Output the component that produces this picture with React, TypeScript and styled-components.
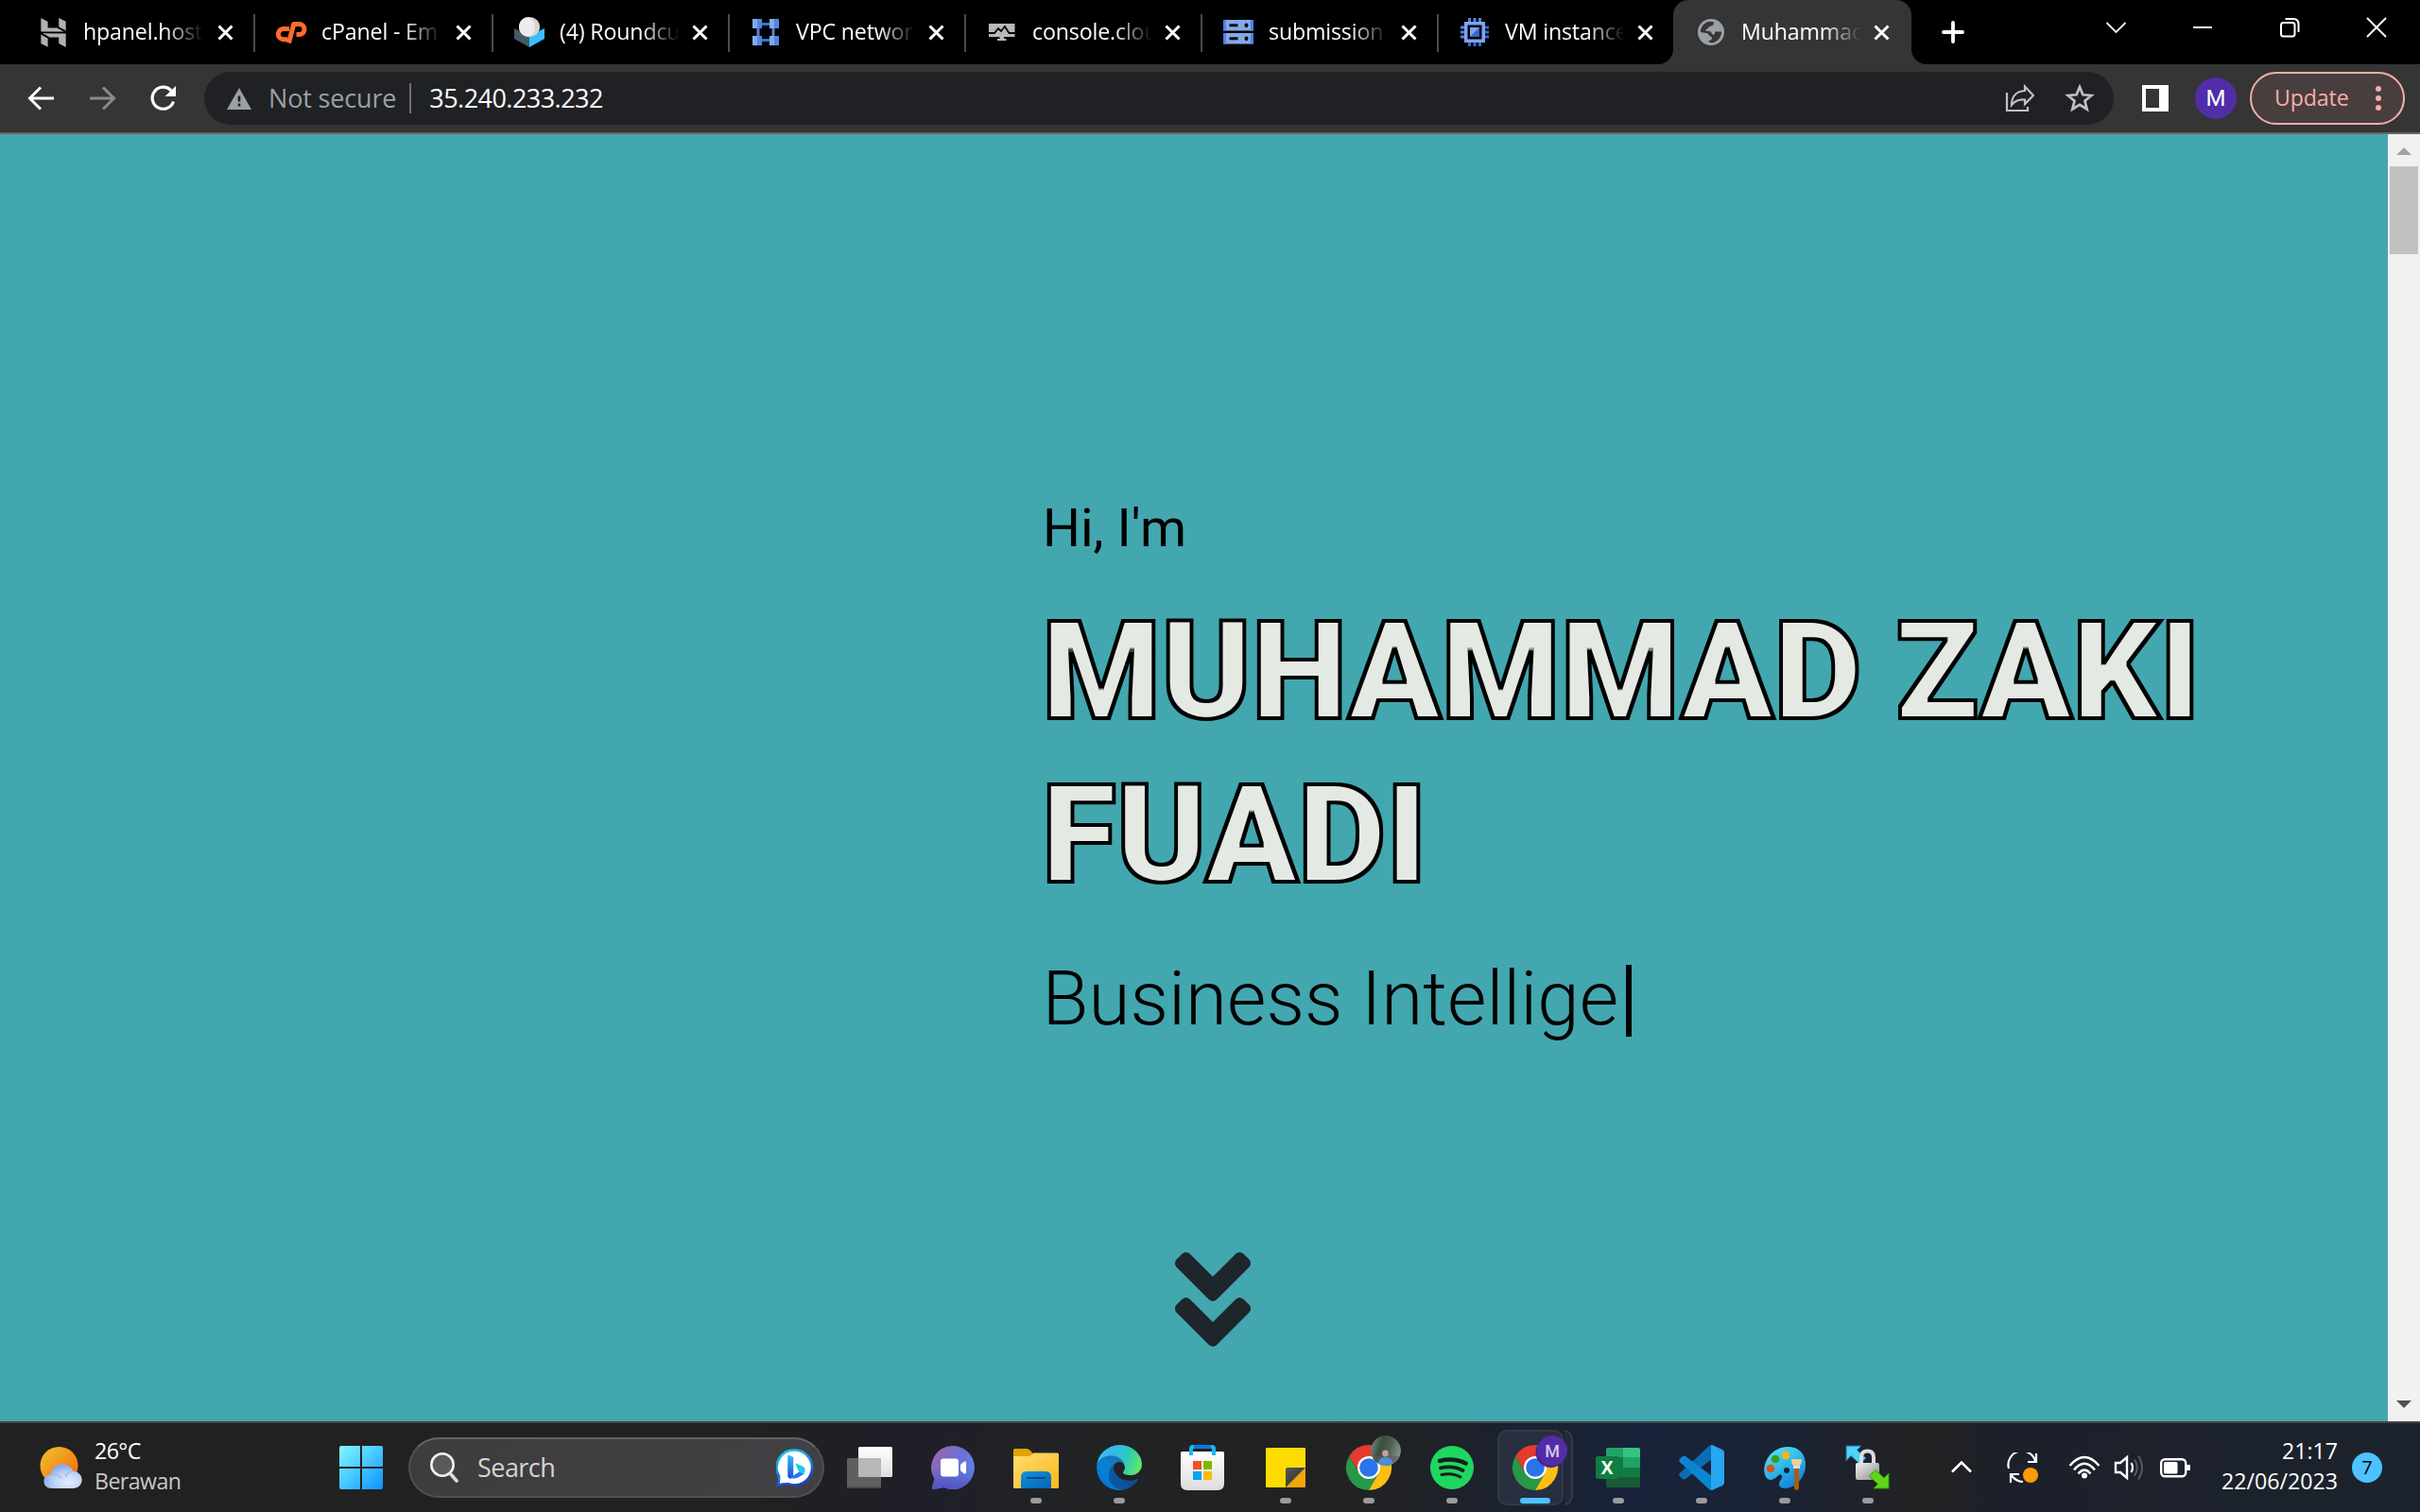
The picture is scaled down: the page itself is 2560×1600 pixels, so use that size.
import React from 'react';
import styled, { createGlobalStyle } from 'styled-components';
import { FaAngleDoubleDown } from 'react-icons/fa';
import { SiHostinger } from 'react-icons/si';

const UI_FONT = '"Segoe UI", "Open Sans", "Noto Sans", sans-serif';

const GlobalStyle = createGlobalStyle`
  *, *::before, *::after { box-sizing: border-box; }
  html, body { margin: 0; padding: 0; background: #000; overflow: hidden; }
  svg { display: block; flex: none; }
`;

const Screen = styled.div`
  width: 2560px;
  height: 1600px;
  display: flex;
  flex-direction: column;
  overflow: hidden;
  font-family: ${UI_FONT};
  letter-spacing: -0.01em;
`;

/* ---------- tab strip ---------- */

const TabStrip = styled.header`
  height: 68px;
  flex: none;
  display: flex;
  align-items: stretch;
  background: #000;
  padding-left: 18px;
`;

const Tab = styled.div<{ $width: number; $active?: boolean; $divider?: boolean }>`
  position: relative;
  width: ${p => p.$width}px;
  flex: none;
  display: flex;
  align-items: center;
  margin-left: ${p => (p.$active ? -2 : 0)}px;
  padding: 0 23px 0 ${p => (p.$active ? 24 : 22)}px;
  background: ${p => (p.$active ? '#353535' : 'transparent')};
  border-radius: ${p => (p.$active ? '16px 16px 0 0' : '0')};
  ${p =>
    p.$divider &&
    `&::after {
      content: '';
      position: absolute;
      right: 0;
      top: 15px;
      width: 2px;
      height: 40px;
      background: #4b4b4b;
    }`}
`;

const TabFoot = styled.span<{ $side: 'left' | 'right' }>`
  position: absolute;
  bottom: 0;
  ${p => p.$side}: -16px;
  width: 16px;
  height: 16px;
  background: radial-gradient(
    circle at ${p => (p.$side === 'left' ? '0 0' : '100% 0')},
    transparent 15.5px,
    #353535 16.5px
  );
`;

const TabIcon = styled.span`
  width: 32px;
  height: 32px;
  flex: none;
  display: flex;
  align-items: center;
  justify-content: center;
`;

const TabTitle = styled.span`
  width: 132px;
  flex: none;
  margin: -2px auto 0 16px;
  overflow: hidden;
  white-space: nowrap;
  color: #fff;
  font-size: 23.2px;
  line-height: 36px;
  mask-image: linear-gradient(90deg, #000 86px, transparent 127px);
`;

const NewTab = styled.div`
  width: 100px;
  display: flex;
  align-items: center;
  padding-left: 32px;
`;

const WindowControls = styled.div`
  margin-left: auto;
  display: flex;
  align-items: center;
  gap: 68px;
  padding: 0 34px 10px 0;
`;

/* ---------- toolbar ---------- */

const Toolbar = styled.div`
  height: 74px;
  flex: none;
  display: flex;
  align-items: center;
  background: #353535;
  border-bottom: 2px solid #666;
  padding: 0 16px 0 28px;
`;

const NavButtons = styled.div`
  width: 188px;
  display: flex;
  gap: 32px;
`;

const Omnibox = styled.div`
  flex: 1;
  height: 56px;
  display: flex;
  align-items: center;
  border-radius: 28px;
  background: #202124;
  padding: 0 20px 0 24px;
`;

const Security = styled.span`
  margin-left: 18px;
  color: #9aa0a6;
  font-size: 27px;
  line-height: 36px;
`;

const AddressDivider = styled.span`
  width: 2px;
  height: 32px;
  background: #6d7074;
  margin: 0 19px 0 14px;
`;

const Address = styled.span`
  flex: 1;
  color: #fff;
  font-size: 27px;
  line-height: 36px;
  letter-spacing: -0.02em;
`;

const OmniActions = styled.div`
  display: flex;
  align-items: center;
  gap: 32px;
`;

const SidePanel = styled.span`
  width: 28px;
  height: 28px;
  margin: 0 28px 0 30px;
  border: 4px solid #fff;
  border-right-width: 10px;
`;

const Profile = styled.span`
  width: 44px;
  height: 44px;
  border-radius: 50%;
  background: #512da8;
  color: #fff;
  font: 400 24px/44px Roboto, sans-serif;
  text-align: center;
  margin-right: 14px;
`;

const UpdateButton = styled.div`
  width: 164px;
  height: 56px;
  display: flex;
  align-items: center;
  justify-content: space-between;
  border: 2px solid #f6aea9;
  border-radius: 28px;
  background: #483e3e;
  color: #f6aea9;
  font-size: 23.2px;
  line-height: 32px;
  padding: 0 23px 0 24px;
`;

const UpdateLabel = styled.span`
  padding-bottom: 2px;
`;

/* ---------- page ---------- */

const Viewport = styled.div`
  flex: 1;
  min-height: 0;
  display: flex;
`;

const Hero = styled.main`
  flex: 1;
  background: #43a7af;
  padding: 381px 0 0 1102px;
  font-family: Roboto, sans-serif;
  letter-spacing: normal;
  color: #000;
`;

const Greeting = styled.p`
  margin: 0 0 0 1px;
  font-size: 56px;
  line-height: 72px;
`;

/* The stroke is painted behind the fill; the filter then draws the inner
   half of the outline, so that no seams show inside the letters. */
const Name = styled.h1`
  margin: 30px 0 0;
  width: 1300px;
  font-size: 144px;
  font-weight: 900;
  line-height: 172.8px;
  color: #e4e9e4;
  -webkit-text-stroke: 4px #000;
  paint-order: stroke fill;
  filter: url(#outline);
`;

const FilterDefs = styled.svg`
  position: absolute;
  width: 0;
  height: 0;
`;

const Role = styled.p`
  margin: 38.600px 0 0 0.500px;
  height: 96px;
  display: flex;
  align-items: center;
  font-size: 80px;
  font-weight: 300;
  line-height: 96px;
  white-space: nowrap;
`;

const Caret = styled.span`
  width: 6px;
  height: 76px;
  margin: 4px 0 0 8px;
  background: #000;
`;

const ScrollHint = styled.div`
  width: 128px;
  margin: 206px 0 0 117px;
  font-size: 128px;
  color: #1e252b;
`;

const Scrollbar = styled.div`
  width: 34px;
  background: #f1f1f1;
  display: flex;
  flex-direction: column;
  align-items: center;
  padding: 14px 0;
`;

const Arrow = styled.span<{ $down?: boolean }>`
  border: 8px solid transparent;
  border-top: ${p => (p.$down ? '8px solid #505050' : '0')};
  border-bottom: ${p => (p.$down ? '0' : '8px solid #a3a3a3')};
`;

const Thumb = styled.span`
  width: 30px;
  height: 93px;
  margin: 12px 0 auto;
  background: #c1c1c1;
`;

/* ---------- taskbar ---------- */

const Taskbar = styled.footer`
  height: 96px;
  flex: none;
  display: flex;
  align-items: center;
  border-top: 2px solid #444547;
  padding: 0 40px;
  background: linear-gradient(
    90deg,
    #212121 0, #212121 800px, #1e1f29 980px, #212225 1080px, #222 1420px,
    #1c212b 1560px, #18233a 1740px, #1a2234 1880px, #212226 2000px, #222 2040px,
    #1c202a 2120px, #1c232c 2560px
  );
`;

const Weather = styled.div`
  width: 298px;
  display: flex;
  align-items: center;
  gap: 11px;
`;

const TwoLines = styled.div<{ $right?: boolean }>`
  display: flex;
  flex-direction: column;
  text-align: ${p => (p.$right ? 'right' : 'left')};
  letter-spacing: ${p => (p.$right ? '0' : '-0.025em')};
  font-size: 23.2px;
  line-height: 32px;
  padding-bottom: 4px;
  color: #fff;
`;

const Condition = styled.span`
  color: #c8c8c8;
`;

const SearchBox = styled.div`
  width: 440px;
  height: 64px;
  margin: 0 4px 0 6px;
  display: flex;
  align-items: center;
  border: 2px solid #505052;
  border-top-color: #646466;
  border-radius: 32px;
  background: linear-gradient(90deg, #3d3d3d, #414145);
  padding: 0 9px 0 21px;
`;

const SearchLabel = styled.span`
  flex: 1;
  margin-left: 20px;
  color: #d4d4d4;
  font-size: 27px;
  line-height: 36px;
  letter-spacing: -0.02em;
`;

const Slot = styled.div<{ $running?: boolean; $active?: boolean }>`
  position: relative;
  width: 88px;
  height: 80px;
  flex: none;
  display: flex;
  align-items: center;
  justify-content: center;
  &::after {
    content: '';
    display: ${p => (p.$running || p.$active ? 'block' : 'none')};
    position: absolute;
    bottom: 2px;
    left: 50%;
    width: ${p => (p.$active ? 32 : 12)}px;
    height: 6px;
    border-radius: 3px;
    transform: translateX(-50%);
    background: ${p => (p.$active ? '#4cc2ff' : '#9b9b9f')};
  }
`;

const ActivePlate = styled.span<{ $back?: boolean }>`
  position: absolute;
  top: 0;
  left: ${p => (p.$back ? 68 : 4)}px;
  width: ${p => (p.$back ? 16 : 70)}px;
  height: 80px;
  border: 2px solid #333a48;
  border-left-width: ${p => (p.$back ? 0 : 2)}px;
  border-radius: ${p => (p.$back ? '0 10px 10px 0' : '10px')};
  background: ${p => (p.$back ? '#232a39' : '#282f3e')};
  clip-path: ${p => (p.$back ? 'inset(0 0 0 7px)' : 'none')};
`;

const IconLayer = styled.span`
  position: relative;
`;

const Tray = styled.div`
  margin-left: auto;
  display: flex;
  align-items: center;
`;

const TraySpace = styled.span<{ $after: number }>`
  margin-right: ${p => p.$after}px;
`;

const Notifications = styled.span`
  width: 32px;
  height: 32px;
  margin-left: 15px;
  border-radius: 50%;
  background: #4cc2ff;
  color: #000;
  font-size: 20px;
  line-height: 31px;
  text-align: center;
`;

/* ---------- favicons ---------- */

const CpanelIcon = () => (
  <svg width="34" height="24" viewBox="0 0 34 24" fill="none" stroke="#ff6c2c" strokeWidth="5">
    <path d="M15 8.500H9.500A5.600 5.600 0 0 0 8.500 19.700H13" />
    <path d="M14.500 23.500 19.700 3.500H25.500A5.200 5.200 0 0 1 25.500 14.500H22.500" strokeLinejoin="round" />
  </svg>
);

const RoundcubeIcon = () => (
  <svg width="32" height="32" viewBox="0 0 32 32">
    <path d="M0 12 16 20V32L0 23Z" fill="#455a64" />
    <path d="M32 12 16 20V32L32 23Z" fill="#37beff" />
    <ellipse cx="16" cy="10.5" rx="11" ry="10.5" fill="#d5d5d5" />
    <path d="M14 0.2C23 1 25 16 16 21C9 21 5 16 5 10.5C5 5 9 .6 14 .2Z" fill="#ececec" />
  </svg>
);

const VpcIcon = () => (
  <svg width="28" height="28" viewBox="0 0 28 28">
    <path d="M6 8V20M22 8V20" stroke="#5383e0" strokeWidth="3" />
    <path d="M8 5.5H20M8 22.500H20" stroke="#3c6fd8" strokeWidth="3" />
    {[[0, 0], [18, 0], [0, 18], [18, 18]].map(([x, y]) => (
      <g key={`${x}-${y}`}>
        <path d={`M${x} ${y}h10v10h-10Z`} fill="#85a8ea" />
        <path d={`M${x + 5} ${y}h5v10h-5Z`} fill="#5585e2" />
      </g>
    ))}
  </svg>
);

const ConsoleIcon = () => (
  <svg width="28" height="20" viewBox="0 0 28 20">
    <path d="M0 1H27.500V15H16V17H18.500V19H9V17H11.500V15H0Z" fill="#b9b9b9" />
    <path d="M0 11H6L10 6 13 9 17 4 21.500 11H28" fill="none" stroke="#050505" strokeWidth="1.800" />
  </svg>
);

const ServerIcon = () => (
  <svg width="32" height="26" viewBox="0 0 32 26">
    {[0, 14].map(y => (
      <g key={y}>
        <path d={`M0 ${y}h32v11.500h-32Z`} fill="#85a8ea" />
        <path d={`M0 ${y}h3v11.500h-3ZM29 ${y}h3v11.500h-3Z`} fill="#4f80e0" />
        <path d={`M6.500 ${y + 4.300}h9v3h-9Z`} fill="#0b0b10" />
        <ellipse cx="24.500" cy={y + 5.800} rx="2" ry="2.400" fill="#0b0b10" />
      </g>
    ))}
  </svg>
);

const VmIcon = () => (
  <svg width="30" height="30" viewBox="0 0 30 30">
    <path d="M9.500 0V5M15 0V5M20.500 0V5M0 10H5M0 15H5M0 20H5" stroke="#5383e0" strokeWidth="3" />
    <path d="M9.500 25V30M15 25V30M20.500 25V30M25 10H30M25 15H30M25 20H30" stroke="#3367d6" strokeWidth="3" />
    <path d="M4 4H26V26H4ZM7.500 7.500V22.500H22.500V7.500Z" fill="#7da4ee" fillRule="evenodd" />
    <path d="M10 10H20V20H10Z" fill="#7da4ee" />
    <path d="M20 10V20H10Z" fill="#3367d6" />
  </svg>
);

const GlobeIcon = () => (
  <svg width="28" height="28" viewBox="0 0 28 28">
    <circle cx="14" cy="14" r="14" fill="#9aa0a6" />
    <path
      d="M3 14C2.800 8.500 7 3.500 12.500 2.800L17 3.300C17.300 6 16 7.500 13.500 7.500C11.500 7.500 11.500 10.500 9.500 10.800C8 11 8 13 9.500 13H12C14 13 15 15 15 16.500H18V13.500H25C25.300 19.500 20.500 25 14.500 25.200C12.500 25.200 11.500 24.500 11.500 23.500C12 22.500 14.500 22.500 15 21C15.200 20 14.500 18.500 13.500 18.500C12 18.500 11.500 15 9 15Z"
      fill="#353535"
    />
  </svg>
);

const CloseGlyph = ({ size = 17, stroke = 3 }: { size?: number; stroke?: number }) => (
  <svg width={size} height={size} viewBox={`0 0 ${size} ${size}`}>
    <path d={`M1.500 1.500L${size - 1.5} ${size - 1.5}M${size - 1.5} 1.500L1.500 ${size - 1.5}`} stroke="#fff" strokeWidth={stroke} />
  </svg>
);

/* ---------- toolbar icons ---------- */

const ArrowIcon = ({ forward }: { forward?: boolean }) => (
  <svg width="32" height="32" viewBox="0 0 32 32">
    <path
      d={forward ? 'M3 16H28M17 4.500 28.500 16 17 27.500' : 'M29 16H4M15 4.500 3.500 16 15 27.500'}
      fill="none"
      stroke={forward ? '#8b8b8b' : '#fff'}
      strokeWidth="3"
    />
  </svg>
);

const ReloadIcon = () => (
  <svg width="32" height="32" viewBox="0 0 32 32">
    <path d="M27.500 19.500A11.500 11.500 0 1 1 25 7.800" fill="none" stroke="#fff" strokeWidth="3.200" />
    <path d="M30 3V14H18.500Z" fill="#fff" />
  </svg>
);

const WarningIcon = () => (
  <svg width="26" height="23" viewBox="0 0 26 23">
    <path d="M13 0 26 23H0Z" fill="#9aa0a6" />
    <path d="M11.700 8.500H14.300V14.500H11.700ZM11.700 16.500H14.300V19.500H11.700Z" fill="#202124" />
  </svg>
);

const ShareIcon = () => (
  <svg width="32" height="32" viewBox="0 0 32 32">
    <path d="M3 10V29H25V25" fill="none" stroke="#c1c1c1" strokeWidth="2.200" />
    <path d="M8 23C8 13 14 8.500 22 8V3.500L31 13 22 22V17.500C16 17 11.500 18.500 8 23Z" fill="none" stroke="#c1c1c1" strokeWidth="2.200" />
  </svg>
);

const StarIcon = () => (
  <svg width="32" height="32" viewBox="0 0 32 32">
    <path
      d="M16 4 19.400 12.300 28.400 13 21.500 18.800 23.700 27.500 16 22.800 8.300 27.500 10.500 18.800 3.600 13 12.600 12.300Z"
      fill="none"
      stroke="#c1c1c1"
      strokeWidth="2.700"
    />
  </svg>
);

const Dots = () => (
  <svg width="6" height="26" viewBox="0 0 6 26">
    {[3, 13, 23].map(y => (
      <circle key={y} cx="3" cy={y} r="3" fill="#f6aea9" />
    ))}
  </svg>
);

/* ---------- taskbar icons ---------- */

const WeatherIcon = () => (
  <svg width="49" height="48" viewBox="-1 0 49 48">
    <defs>
      <linearGradient id="sun" x1="0" y1="0" x2="1" y2="1">
        <stop offset="0" stopColor="#f2c530" />
        <stop offset="1" stopColor="#f2600c" />
      </linearGradient>
      <radialGradient id="cloud" cx=".65" cy=".75" r=".7">
        <stop offset="0" stopColor="#e4edfb" />
        <stop offset=".6" stopColor="#bccff5" />
        <stop offset="1" stopColor="#85a8ee" />
      </radialGradient>
    </defs>
    <circle cx="21.500" cy="22" r="20" fill="url(#sun)" />
    <path d="M13 46A7.300 7.300 0 0 1 12.500 31.200A12.500 12.500 0 0 1 36.500 28A9 9 0 0 1 37 46Z" fill="url(#cloud)" />
    <path d="M13 31C18 31 22 32 24 35" fill="none" stroke="#9db9f0" strokeWidth="1.500" />
    <path d="M36 28C31 28 29 31 28.500 34" fill="none" stroke="#9db9f0" strokeWidth="1.500" />
  </svg>
);

const StartIcon = () => (
  <svg width="46" height="46" viewBox="0 0 46 46">
    <defs>
      <linearGradient id="start" x1="0" y1="0" x2="46" y2="46" gradientUnits="userSpaceOnUse">
        <stop offset="0" stopColor="#81f7ff" />
        <stop offset=".5" stopColor="#48c8ff" />
        <stop offset="1" stopColor="#0794ff" />
      </linearGradient>
    </defs>
    <path d="M2 0H22V22H0V2A2 2 0 0 1 2 0ZM24 0H44A2 2 0 0 1 46 2V22H24ZM0 24H22V46H2A2 2 0 0 1 0 44ZM24 24H46V44A2 2 0 0 1 44 46H24Z" fill="url(#start)" />
  </svg>
);

const SearchIcon = () => (
  <svg width="30" height="32" viewBox="0 0 30 32">
    <circle cx="13" cy="13" r="11.700" fill="#5a5a5c" stroke="#f0f0f2" strokeWidth="2.600" />
    <path d="M21.500 22.500 28 30" stroke="#d8dae2" strokeWidth="3.600" strokeLinecap="round" />
  </svg>
);

const BingIcon = () => (
  <svg width="40" height="40" viewBox="0 0 40 40">
    <defs>
      <linearGradient id="bing" x1="0" y1="0" x2=".4" y2="1">
        <stop offset="0" stopColor="#1fd4ea" />
        <stop offset=".5" stopColor="#2090f0" />
        <stop offset="1" stopColor="#1746c8" />
      </linearGradient>
      <linearGradient id="bingb" x1="0" y1="0" x2="0" y2="1">
        <stop offset="0" stopColor="#39b5f6" />
        <stop offset="1" stopColor="#1750dc" />
      </linearGradient>
    </defs>
    <path d="M20 1.500A18.500 18.500 0 1 1 13 37.300Q8 37 2 38.500Q3.500 34 3 29A18.500 18.500 0 0 1 20 1.500Z" fill="#fff" stroke="url(#bing)" strokeWidth="2.600" />
    <path d="M13 7.500 17.500 9.500V28L15.500 31Q13 31 13 28Z" fill="url(#bingb)" stroke="url(#bingb)" strokeWidth="1.500" strokeLinejoin="round" />
    <path d="M21 16 29 19.500Q32 23 28 28L25 25 23 21Z" fill="#22c7ee" stroke="#22c7ee" strokeLinejoin="round" />
    <path d="M15 30.500 24.500 24.500 28.500 27Q20 34 15 30.500Z" fill="#2477ee" />
  </svg>
);

const TaskViewIcon = () => (
  <svg width="48" height="48" viewBox="0 0 48 48">
    <defs>
      <linearGradient id="tv" x1="0" y1="0" x2="0" y2="1">
        <stop offset="0" stopColor="#fff" />
        <stop offset="1" stopColor="#dedede" />
      </linearGradient>
    </defs>
    <rect x="0" y="14" width="36" height="32" rx="1.500" fill="#5f5f61" />
    <rect x="12" y="2" width="36" height="32" rx="1.500" fill="url(#tv)" />
    <rect x="12" y="14" width="24" height="20" fill="#b8b8b8" />
    <path d="M0 45H36" stroke="#49494b" strokeWidth="2" />
  </svg>
);

const ChatIcon = () => (
  <svg width="48" height="48" viewBox="0 0 48 48">
    <defs>
      <linearGradient id="chat" x1=".1" y1=".2" x2=".9" y2=".7">
        <stop offset="0" stopColor="#9468b4" />
        <stop offset=".5" stopColor="#6d6fd2" />
        <stop offset="1" stopColor="#6183e6" />
      </linearGradient>
      <linearGradient id="chat2" x1="0" y1="0" x2="0" y2="1">
        <stop offset=".5" stopColor="#5252c4" stopOpacity="0" />
        <stop offset="1" stopColor="#5252c4" />
      </linearGradient>
    </defs>
    {['url(#chat)', 'url(#chat2)'].map(fill => (
      <path key={fill} d="M24 1A23 23 0 1 1 14.500 45L4 47Q1.500 47 2 44.500L4.500 36A23 23 0 0 1 24 1Z" fill={fill} />
    ))}
    <rect x="11" y="14.500" width="19" height="19" rx="3" fill="#fff" />
    <path d="M32 21 36 17.500Q38 17 38 19V29Q38 31 36 30.500L32 27Z" fill="#fff" />
  </svg>
);

const FolderIcon = () => (
  <svg width="48" height="48" viewBox="0 0 48 48">
    <defs>
      <linearGradient id="fold" x1="0" y1="0" x2="1" y2="1">
        <stop offset="0" stopColor="#ffdd73" />
        <stop offset="1" stopColor="#fbb917" />
      </linearGradient>
      <linearGradient id="foldb" x1="0" y1="0" x2="1" y2="1">
        <stop offset="0" stopColor="#1194dc" />
        <stop offset="1" stopColor="#0561b4" />
      </linearGradient>
    </defs>
    <path d="M0 5.500Q0 4 1.500 4H14Q16 4 18 6L20 8.500V14H0Z" fill="#e2a207" />
    <path d="M0 12H16Q18 12 19.500 10L21 8.500H46.500Q48 8.500 48 10V44.500Q48 46 46.500 46H1.500Q0 46 0 44.500Z" fill="url(#fold)" />
    <path d="M8 46V34Q8 28 14 28H34Q40 28 40 34V46Z" fill="url(#foldb)" />
    <path d="M15 35H33" stroke="#06478a" strokeWidth="2" strokeLinecap="round" />
  </svg>
);

const EdgeIcon = () => (
  <svg width="48" height="48" viewBox="4 4 257 257">
    <defs>
      <linearGradient id="e1" x1="63" y1="178" x2="241" y2="178" gradientUnits="userSpaceOnUse">
        <stop offset="0" stopColor="#0c59a4" />
        <stop offset="1" stopColor="#114a8b" />
      </linearGradient>
      <linearGradient id="e2" x1="157" y1="100" x2="46" y2="221" gradientUnits="userSpaceOnUse">
        <stop offset="0" stopColor="#1b6fb4" />
        <stop offset=".4" stopColor="#0f7fcc" />
        <stop offset=".7" stopColor="#0680d7" />
        <stop offset="1" stopColor="#0078d4" />
      </linearGradient>
      <linearGradient id="e3" x1="10" y1="60" x2="250" y2="150" gradientUnits="userSpaceOnUse">
        <stop offset="0" stopColor="#35c1f1" />
        <stop offset=".3" stopColor="#36b8ee" />
        <stop offset=".6" stopColor="#2cc8c0" />
        <stop offset="1" stopColor="#66eb5e" />
      </linearGradient>
    </defs>
    <path fill="url(#e1)" d="M235.680 195.460a93.730 93.730 0 0 1-10.540 4.710 101.870 101.870 0 0 1-35.900 6.460c-47.320 0-88.540-32.550-88.540-74.320A31.480 31.480 0 0 1 117.130 105c-42.800 1.800-53.800 46.400-53.800 72.530 0 73.880 68.090 81.370 82.760 81.370 7.910 0 19.840-2.300 27-4.560l1.310-.440a128.340 128.340 0 0 0 66.600-52.800 4 4 0 0 0-5.320-5.640Z" />
    <path fill="url(#e2)" d="M110.340 246.340A79.200 79.200 0 0 1 87.600 225a80.720 80.720 0 0 1 29.530-120c3.120-1.470 8.450-4.130 15.540-4a32.350 32.350 0 0 1 25.690 13 31.880 31.880 0 0 1 6.360 18.660c0-.210 24.460-79.600-80-79.600-43.900 0-80 41.660-80 78.210a130.150 130.150 0 0 0 12.110 56 128 128 0 0 0 156.380 67.110 75.550 75.550 0 0 1-62.780-8Z" />
    <path fill="url(#e3)" d="M156.940 153.780c-.810 1.050-3.300 2.500-3.300 5.660 0 2.610 1.700 5.120 4.720 7.230 14.380 10 41.490 8.680 41.560 8.680a59.560 59.560 0 0 0 30.270-8.350 61.380 61.380 0 0 0 30.430-52.880c.260-22.410-8-37.310-11.340-43.910C228.090 28.760 182.350 4.520 132.610 4.520a128 128 0 0 0-128 126.200c.480-36.540 36.800-66.050 80-66.050 3.500 0 23.460.340 42 10.070 16.340 8.580 24.900 18.940 30.850 29.210 6.180 10.670 7.280 24.150 7.280 29.520 0 5.370-2.740 13.330-7.800 20.310Z" />
  </svg>
);

const StoreIcon = () => (
  <svg width="48" height="48" viewBox="0 0 48 48">
    <defs>
      <linearGradient id="store" x1="0" y1="0" x2="0" y2="1">
        <stop offset="0" stopColor="#fff" />
        <stop offset="1" stopColor="#dcdcdc" />
      </linearGradient>
    </defs>
    <path d="M1 8.500Q1 7 2.500 7H45.500Q47 7 47 8.500V41Q47 48 40 48H8Q1 48 1 41Z" fill="url(#store)" />
    <path d="M12 11V4Q12 2 14 2H34Q36 2 36 4V11" fill="none" stroke="#18b8f4" strokeWidth="4" />
    <path d="M15 2H33" stroke="#0a78e0" strokeWidth="4" />
    <path d="M14 17H23V26H14Z" fill="#f25022" />
    <path d="M25 17H34V26H25Z" fill="#7fba00" />
    <path d="M14 28H23V37H14Z" fill="#00a4ef" />
    <path d="M25 28H34V37H25Z" fill="#ffb900" />
  </svg>
);

const NotesIcon = () => (
  <svg width="48" height="48" viewBox="0 0 48 48">
    <defs>
      <linearGradient id="fold2" x1="0" y1="0" x2="1" y2="1">
        <stop offset="0" stopColor="#565656" />
        <stop offset="1" stopColor="#2b2b2b" />
      </linearGradient>
    </defs>
    <path d="M4 3H44Q45 3 45 4V25L25 45H4Q3 45 3 44V4Q3 3 4 3Z" fill="#ffdc00" />
    <path d="M45 24V44Q45 45 44 45H24Z" fill="#f4a508" />
    <path d="M24 45V26Q24 24 26 24H45Z" fill="url(#fold2)" />
  </svg>
);

const ChromeIcon = ({ badge }: { badge: 'photo' | 'letter' }) => (
  <svg width="48" height="48" viewBox="0 0 48 48" overflow="visible">
    <path d="M3.200 12A24 24 0 0 1 44.800 12H24L13.600 30Z" fill="#e33b2e" />
    <path d="M3.200 12A24 24 0 0 0 24 48L34.400 30 24 24 13.600 30Z" fill="#279847" />
    <path d="M44.800 12A24 24 0 0 1 24 48L34.400 30 24 12Z" fill="#fcc013" />
    <circle cx="24" cy="24" r="12" fill="#fff" />
    <circle cx="24" cy="24" r="9.800" fill="#2a74ea" />
    {badge === 'photo' ? (
      <g>
        <defs>
          <linearGradient id="photo" x1="0" y1="0" x2="1" y2=".3">
            <stop offset="0" stopColor="#7f9499" />
            <stop offset=".4" stopColor="#3c4c40" />
            <stop offset=".7" stopColor="#4f5f50" />
            <stop offset="1" stopColor="#7e8a86" />
          </linearGradient>
          <clipPath id="photoClip">
            <circle cx="42" cy="6" r="16" />
          </clipPath>
        </defs>
        <g clipPath="url(#photoClip)">
          <circle cx="42" cy="6" r="16" fill="url(#photo)" />
          <path d="M28 12H58V24H28Z" fill="#5a5f60" opacity=".6" />
          <path d="M33 22Q34 13 42 13Q49 13 50 22Z" fill="#4a8fd8" />
          <circle cx="41.500" cy="9" r="3.400" fill="#c79c9a" />
        </g>
      </g>
    ) : (
      <g>
        <circle cx="40.500" cy="8" r="16" fill="#43248c" />
        <circle cx="42" cy="6" r="16" fill="#512da8" />
        <text x="42" y="12.500" textAnchor="middle" fontFamily="Roboto, sans-serif" fontSize="18" fontWeight="500" fill="#d3c8ea" letterSpacing="0">
          M
        </text>
      </g>
    )}
  </svg>
);

const SpotifyIcon = () => (
  <svg width="48" height="48" viewBox="0 0 48 48">
    <circle cx="24" cy="24" r="23" fill="#1fd760" />
    <g fill="none" stroke="#15201a" strokeLinecap="round">
      <path d="M11 17C20 14.500 30 15.500 38.500 19.500" strokeWidth="4.600" />
      <path d="M12 24.500C20 22.500 28 23 35.500 27" strokeWidth="3.800" />
      <path d="M13 31.500C20 30 27 30.500 33 34" strokeWidth="3" />
    </g>
  </svg>
);

const ExcelIcon = () => (
  <svg width="48" height="48" viewBox="0 0 48 48">
    <path d="M13 3H29V13H11V5Q11 3 13 3Z" fill="#21a366" />
    <path d="M29 3H45Q47 3 47 4.500V13H29Z" fill="#33c481" />
    <path d="M11 13H29V34H11Z" fill="#107c41" />
    <path d="M29 13H47V24H29Z" fill="#21a366" />
    <path d="M29 24H47V34H29Z" fill="#107c41" />
    <path d="M11 34H47V43.500Q47 45 45.500 45H12.500Q11 45 11 43.500Z" fill="#185c37" />
    <rect x="0" y="12" width="24" height="24" rx="2" fill="#107c41" />
    <text x="12" y="31" textAnchor="middle" fontFamily='"Open Sans", sans-serif' fontSize="19" fontWeight="700" fill="#fff">
      X
    </text>
  </svg>
);

const VsCodeIcon = () => (
  <svg width="48" height="48" viewBox="0 0 48 48">
    <path d="M35 0V15L7 36Q5.500 37 4 36L.800 33Q-.300 31.500 .800 30L32 1Q33.500 0 35 0Z" fill="#0a6db3" />
    <path d="M35 48V33L7 12Q5.500 11 4 12L.800 15Q-.300 16.500 .800 18L32 47Q33.500 48 35 48Z" fill="#0a86d1" />
    <path d="M35 0 46 5Q48 6 48 8V40Q48 42 46 43L35 48Q36 47 36 45V3Q36 1 35 0Z" fill="#27a6f2" />
    <path d="M34 0.500 36 0V48L34 47.500Z" fill="#27a6f2" />
  </svg>
);

const PaintIcon = () => (
  <svg width="48" height="48" viewBox="0 0 48 48">
    <defs>
      <linearGradient id="pal" x1=".2" y1="0" x2=".8" y2="1">
        <stop offset="0" stopColor="#58e2f6" />
        <stop offset=".5" stopColor="#2bb2ea" />
        <stop offset="1" stopColor="#1279d2" />
      </linearGradient>
    </defs>
    <path
      d="M28 2C40 2 46 11 46 21C46 34 36 46 24 46C19 46 17 43 18.500 39L21 35C22.500 31.500 19 30.500 16.500 33C13 36.500 9 38 6 36C2 33 1 25 4 18C8 8 17 2 28 2Z"
      fill="url(#pal)"
    />
    <circle cx="9" cy="25" r="4.300" fill="#dc5015" />
    <circle cx="14" cy="15" r="4.300" fill="#37a014" />
    <circle cx="25" cy="11" r="4.300" fill="#fcb70a" />
    <circle cx="26" cy="27" r="3" fill="#152238" />
    <path d="M34 24H39L39 46Q36.500 50 34 46Z" fill="#aa5d0d" />
    <path d="M33 21H40V25H33Z" fill="#d8dde0" />
    <path d="M31 15H42Q42 22 39 22H34Q31 22 31 15Z" fill="#eccd9c" />
  </svg>
);

const WinScpIcon = () => (
  <svg width="48" height="48" viewBox="0 0 48 48">
    <defs>
      <linearGradient id="lock" x1="0" y1="0" x2="1" y2="1">
        <stop offset="0" stopColor="#f2f2f2" />
        <stop offset="1" stopColor="#8a8a8c" />
      </linearGradient>
    </defs>
    <path d="M1 1H17L12.500 5.500 22 14 15 20 6 11.500 1 17Z" fill="#4fd2f4" stroke="#0c6cc0" />
    <path d="M17 21V13Q17 6.500 23.500 6.500T30 13V21" fill="none" stroke="#dcdcde" strokeWidth="4" />
    <rect x="11" y="19" width="25" height="18" rx="2" fill="url(#lock)" />
    <path d="M46 46H30L34.500 41.500 25.500 33 32 26.500 41 35 46 30Z" fill="#5fd41c" stroke="#2f9a08" />
  </svg>
);

/* ---------- tray icons ---------- */

const TrayIcon = ({ w, h = 32, children }: { w: number; h?: number; children: React.ReactNode }) => (
  <svg width={w} height={h} viewBox={`0 0 ${w} ${h}`} fill="none" stroke="#fff" strokeWidth="2.200">
    {children}
  </svg>
);

const tabs = [
  { title: 'hpanel.host', width: 252, icon: <SiHostinger size={31} color="#b0b0b0" /> },
  { title: 'cPanel - Em', width: 252, icon: <CpanelIcon /> },
  { title: '(4) Roundcu', width: 250, icon: <RoundcubeIcon /> },
  { title: 'VPC networ', width: 250, icon: <VpcIcon /> },
  { title: 'console.clou', width: 250, icon: <ConsoleIcon /> },
  { title: 'submission', width: 250, icon: <ServerIcon /> },
  { title: 'VM instance', width: 250, icon: <VmIcon /> },
  { title: 'Muhammac', width: 252, icon: <GlobeIcon />, active: true },
];

export default function App() {
  return (
    <Screen>
      <GlobalStyle />
      <TabStrip>
        {tabs.map((tab, i) => (
          <Tab key={tab.title} $width={tab.width} $active={tab.active} $divider={i < 6}>
            {tab.active && <TabFoot $side="left" />}
            <TabIcon>{tab.icon}</TabIcon>
            <TabTitle>{tab.title}</TabTitle>
            <CloseGlyph />
            {tab.active && <TabFoot $side="right" />}
          </Tab>
        ))}
        <NewTab>
          <svg width="24" height="24" viewBox="0 0 24 24">
            <path d="M12 2V22M2 12H22" stroke="#fff" strokeWidth="3.800" strokeLinecap="round" />
          </svg>
        </NewTab>
        <WindowControls>
          <TrayIcon w={24} h={24}>
            <path d="M2.500 7 12.500 17 22.500 7" strokeWidth="1.800" />
          </TrayIcon>
          <TrayIcon w={24} h={24}>
            <path d="M2 12H22" strokeWidth="2" />
          </TrayIcon>
          <TrayIcon w={24} h={24}>
            <rect x="3" y="7" width="14.500" height="14.500" rx="2.500" strokeWidth="2" />
            <path d="M7.500 3H16Q21.500 3 21.500 8.500V17" strokeWidth="2" />
          </TrayIcon>
          <TrayIcon w={24} h={24}>
            <path d="M2 2 22 22M22 2 2 22" strokeWidth="1.900" />
          </TrayIcon>
        </WindowControls>
      </TabStrip>

      <Toolbar>
        <NavButtons>
          <ArrowIcon />
          <ArrowIcon forward />
          <ReloadIcon />
        </NavButtons>
        <Omnibox>
          <WarningIcon />
          <Security>Not secure</Security>
          <AddressDivider />
          <Address>35.240.233.232</Address>
          <OmniActions>
            <ShareIcon />
            <StarIcon />
          </OmniActions>
        </Omnibox>
        <SidePanel />
        <Profile>M</Profile>
        <UpdateButton>
          <UpdateLabel>Update</UpdateLabel>
          <Dots />
        </UpdateButton>
      </Toolbar>

      <Viewport>
        <Hero>
          <FilterDefs aria-hidden="true">
            <filter id="outline" x="-2%" y="-2%" width="104%" height="104%" colorInterpolationFilters="sRGB">
              <feMorphology in="SourceGraphic" operator="erode" radius="2" result="inner" />
              <feColorMatrix in="SourceAlpha" values="0 0 0 0 0  0 0 0 0 0  0 0 0 0 0  0 0 0 1 0" result="edge" />
              <feMerge>
                <feMergeNode in="edge" />
                <feMergeNode in="inner" />
              </feMerge>
            </filter>
          </FilterDefs>
          <Greeting>Hi, I'm</Greeting>
          <Name>MUHAMMAD ZAKI FUADI</Name>
          <Role>
            Business Intellige
            <Caret />
          </Role>
          <ScrollHint>
            <FaAngleDoubleDown />
          </ScrollHint>
        </Hero>
        <Scrollbar>
          <Arrow />
          <Thumb />
          <Arrow $down />
        </Scrollbar>
      </Viewport>

      <Taskbar>
        <Weather>
          <WeatherIcon />
          <TwoLines>
            <span>26°C</span>
            <Condition>Berawan</Condition>
          </TwoLines>
        </Weather>
        <Slot><StartIcon /></Slot>
        <SearchBox>
          <SearchIcon />
          <SearchLabel>Search</SearchLabel>
          <BingIcon />
        </SearchBox>
        <Slot><TaskViewIcon /></Slot>
        <Slot><ChatIcon /></Slot>
        <Slot $running><FolderIcon /></Slot>
        <Slot $running><EdgeIcon /></Slot>
        <Slot><StoreIcon /></Slot>
        <Slot $running><NotesIcon /></Slot>
        <Slot $running><ChromeIcon badge="photo" /></Slot>
        <Slot $running><SpotifyIcon /></Slot>
        <Slot $active>
          <ActivePlate $back />
          <ActivePlate />
          <IconLayer><ChromeIcon badge="letter" /></IconLayer>
        </Slot>
        <Slot $running><ExcelIcon /></Slot>
        <Slot $running><VsCodeIcon /></Slot>
        <Slot $running><PaintIcon /></Slot>
        <Slot $running><WinScpIcon /></Slot>
        <Tray>
          <TraySpace $after={36}>
            <TrayIcon w={24}>
              <path d="M2 20.500 12 10.500 22 20.500" strokeWidth="2.600" />
            </TrayIcon>
          </TraySpace>
          <TraySpace $after={31}>
            <TrayIcon w={34}>
              <path d="M2 17A14 14 0 0 1 30 9M31 1V10H22" strokeWidth="2.200" />
              <path d="M17 31Q10 31 4.500 24M4 32V23H13" strokeWidth="2.200" />
              <circle cx="25" cy="24" r="8" fill="#ff9a08" stroke="none" />
            </TrayIcon>
          </TraySpace>
          <TraySpace $after={14}>
            <TrayIcon w={34}>
              <path d="M1.500 14Q17-4 32.500 14M6 18.500Q17 5 28 18.500M10.500 22.500Q17 14.500 23.500 22.500" strokeWidth="2.400" />
              <circle cx="17" cy="24.500" r="3" fill="#fff" stroke="none" />
            </TrayIcon>
          </TraySpace>
          <TraySpace $after={14}>
            <TrayIcon w={34}>
              <path d="M2 11H7L14 5V27L7 21H2Z" strokeWidth="2.400" />
              <path d="M18.500 11Q21.500 16 18.500 21" strokeWidth="2.200" />
              <path d="M22 7.500Q27.500 16 22 24.500M26 3.500Q34 16 26 28.500" stroke="#55595f" strokeWidth="2" />
            </TrayIcon>
          </TraySpace>
          <TraySpace $after={32}>
            <TrayIcon w={34}>
              <rect x="2.200" y="7.200" width="26" height="18" rx="4" strokeWidth="2.400" />
              <rect x="5" y="10" width="14.500" height="12.500" rx="1.500" fill="#fff" stroke="none" />
              <path d="M29 13H33V19H29Z" fill="#fff" stroke="none" />
            </TrayIcon>
          </TraySpace>
          <TwoLines $right>
            <span>21:17</span>
            <span>22/06/2023</span>
          </TwoLines>
          <Notifications>7</Notifications>
        </Tray>
      </Taskbar>
    </Screen>
  );
}
